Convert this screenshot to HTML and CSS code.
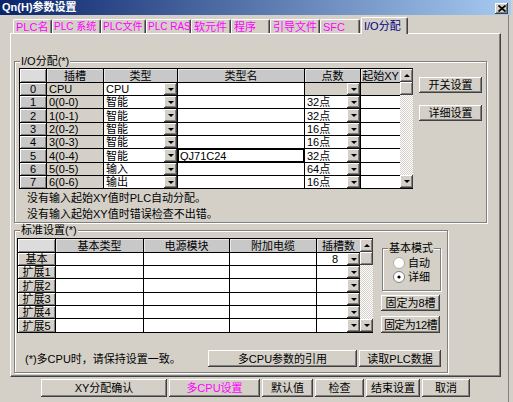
FILE: index.html
```html
<!DOCTYPE html>
<html lang="zh-CN">
<head>
<meta charset="utf-8">
<title>Qn(H)参数设置</title>
<link rel="stylesheet" href="styles.css">
</head>
<body>
<div class="window">
  <div class="titlebar">
    <span class="title">Qn(H)参数设置</span>
    <span class="close"><svg width="8" height="7" viewBox="0 0 8 7"><path d="M0.5 0.5L7.5 6.5M7.5 0.5L0.5 6.5" stroke="#000" stroke-width="1.7" fill="none"/></svg></span>
  </div>
  <div class="frame">
    <div class="tabs">
      <div class="tab w39">PLC名</div>
      <div class="tab w49 tight">PLC 系统</div>
      <div class="tab w45 tight">PLC文件</div>
      <div class="tab w45 tight">PLC RAS</div>
      <div class="tab w40">软元件</div>
      <div class="tab w39">程序</div>
      <div class="tab w50">引导文件</div>
      <div class="tab w40">SFC</div>
      <div class="tab sel">I/O分配</div>
    </div>
    <div class="panel">
      <div class="group grp1">
        <span class="legend">I/O分配(*)</span>
        <div class="g1-main">
          <div class="tbl">
            <div class="grid grid1">
              <div class="hc corner"></div><div class="hc">插槽</div><div class="hc">类型</div><div class="hc">类型名</div><div class="hc">点数</div><div class="hc">起始XY</div>

              <div class="rh">0</div><div class="sl">CPU</div><div class="w dd"><span>CPU</span><i class="ddb"></i></div><div class="w"></div><div class="gy dd"><span></span><i class="ddb"></i></div><div class="gy"></div>
              <div class="rh">1</div><div class="sl">0(0-0)</div><div class="w dd"><span>智能</span><i class="ddb"></i></div><div class="w"></div><div class="w dd"><span>32点</span><i class="ddb"></i></div><div class="w"></div>
              <div class="rh">2</div><div class="sl">1(0-1)</div><div class="w dd"><span>智能</span><i class="ddb"></i></div><div class="w"></div><div class="w dd"><span>32点</span><i class="ddb"></i></div><div class="w"></div>
              <div class="rh">3</div><div class="sl">2(0-2)</div><div class="w dd"><span>智能</span><i class="ddb"></i></div><div class="w"></div><div class="w dd"><span>16点</span><i class="ddb"></i></div><div class="w"></div>
              <div class="rh">4</div><div class="sl">3(0-3)</div><div class="w dd"><span>智能</span><i class="ddb"></i></div><div class="w"></div><div class="w dd"><span>16点</span><i class="ddb"></i></div><div class="w"></div>
              <div class="rh">5</div><div class="sl">4(0-4)</div><div class="w dd"><span>智能</span><i class="ddb"></i></div><div class="w focus">QJ71C24</div><div class="w dd"><span>32点</span><i class="ddb"></i></div><div class="w"></div>
              <div class="rh">6</div><div class="sl">5(0-5)</div><div class="w dd"><span>输入</span><i class="ddb"></i></div><div class="w"></div><div class="w dd"><span>64点</span><i class="ddb"></i></div><div class="w"></div>
              <div class="rh">7</div><div class="sl">6(0-6)</div><div class="w dd"><span>输出</span><i class="ddb"></i></div><div class="w"></div><div class="w dd"><span>16点</span><i class="ddb"></i></div><div class="w"></div>
            </div>
            <div class="vs">
              <div class="sb up"></div><div class="sb thumb"></div><div class="track"></div><div class="sb down"></div>
            </div>
          </div>
          <div class="side">
            <div class="btn side-btn">开关设置</div>
            <div class="btn side-btn second">详细设置</div>
          </div>
        </div>
        <p class="note first">没有输入起始XY值时PLC自动分配。</p>
        <p class="note">没有输入起始XY值时错误检查不出错。</p>
      </div>

      <div class="group grp2">
        <span class="legend">标准设置(*)</span>
        <div class="g2-main">
          <div class="tbl">
            <div class="grid grid2">
              <div class="hc corner"></div><div class="hc">基本类型</div><div class="hc">电源模块</div><div class="hc">附加电缆</div><div class="hc">插槽数</div>

              <div class="rh btnlike">基本</div><div class="w"></div><div class="w"></div><div class="w"></div><div class="w dd"><span class="num">8</span><i class="ddb"></i></div>
              <div class="rh btnlike">扩展1</div><div class="w"></div><div class="w"></div><div class="w"></div><div class="w dd"><span></span><i class="ddb"></i></div>
              <div class="rh btnlike">扩展2</div><div class="w"></div><div class="w"></div><div class="w"></div><div class="w dd"><span></span><i class="ddb"></i></div>
              <div class="rh btnlike">扩展3</div><div class="w"></div><div class="w"></div><div class="w"></div><div class="w dd"><span></span><i class="ddb"></i></div>
              <div class="rh btnlike">扩展4</div><div class="w"></div><div class="w"></div><div class="w"></div><div class="w dd"><span></span><i class="ddb"></i></div>
              <div class="rh btnlike">扩展5</div><div class="w"></div><div class="w"></div><div class="w"></div><div class="w dd"><span></span><i class="ddb"></i></div>
            </div>
            <div class="vs">
              <div class="sb up"></div><div class="sb thumb"></div><div class="track"></div><div class="sb down"></div>
            </div>
          </div>
          <div class="side2">
            <div class="mode">
              <span class="legend mode-legend">基本模式</span>
              <div class="radio"><svg class="rb" width="12" height="12" viewBox="0 0 12 12"><circle cx="6" cy="6" r="5.5" fill="#fff" stroke="#b0aca4"/></svg><span>自动</span></div>
              <div class="radio"><svg class="rb" width="12" height="12" viewBox="0 0 12 12"><circle cx="6" cy="6" r="5.5" fill="#fff" stroke="#808080"/><circle cx="6" cy="6" r="1.6" fill="#000"/></svg><span>详细</span></div>
            </div>
            <div class="btn fix8">固定为8槽</div>
            <div class="btn fix12">固定为12槽</div>
          </div>
        </div>
        <div class="footer-row">
          <span class="hint">(*)多CPU时，请保持设置一致。</span>
          <div class="btn ref-btn">多CPU参数的引用</div>
          <div class="btn read-btn">读取PLC数据</div>
        </div>
      </div>
    </div>

    <div class="btnrow">
      <div class="btn b1">XY分配确认</div>
      <div class="btn b2 pink">多CPU设置</div>
      <div class="btn b3">默认值</div>
      <div class="btn b4">检查</div>
      <div class="btn b5">结束设置</div>
      <div class="btn b6">取消</div>
    </div>
  </div>
</div>
</body>
</html>
```

FILE: styles.css
```css
* { box-sizing: border-box; }
html, body { margin: 0; padding: 0; }
body {
  width: 513px;
  height: 402px;
  overflow: hidden;
  background: #d4d0c8;
  font-family: "Liberation Sans", "Noto Sans CJK SC", sans-serif;
  font-size: 11px;
  line-height: 12px;
  color: #000;
}
.window {
  width: 511px;
  height: 402px;
  display: flex;
  flex-direction: column;
}
.titlebar {
  height: 15px;
  flex: none;
  background: linear-gradient(90deg, #0a246a 0%, #a6caf0 100%);
  display: flex;
  align-items: flex-start;
  justify-content: space-between;
  padding: 0 3px 0 2px;
}
.title {
  color: #fff;
  font-weight: bold;
  font-size: 11px;
  line-height: 15px;
}
.close {
  margin-top: 3px;
  width: 13px;
  height: 11px;
  background: #d4d0c8;
  box-shadow: inset -1px -1px #404040, inset 1px 1px #fff, inset -2px -2px #808080;
  display: flex;
  align-items: center;
  justify-content: center;
}
.frame {
  flex: 1;
  margin-right: 2px;
  border-right: 1px solid #808080;
}

/* tabs */
.tabs {
  height: 18px;
  display: flex;
  align-items: flex-end;
  padding-left: 13px;
}
.tab {
  height: 14px;
  border-top: 1px solid #fff;
  border-left: 1px solid #fff;
  border-right: 1px solid #404040;
  box-shadow: inset -1px 0 #808080;
  border-radius: 2px 2px 0 0;
  color: #ff00ff;
  display: flex;
  align-items: center;
  justify-content: flex-start;
  padding-left: 2px;
  white-space: nowrap;
  line-height: 12px;
}
.tab.tight { font-size: 10px; padding-left: 1px; }
.w39 { width: 39px; }
.w40 { width: 40px; }
.w45 { width: 45px; }
.w49 { width: 49px; }
.w50 { width: 50px; }
.tab.sel {
  width: 47px;
  height: 17px;
  margin-left: 1px;
  margin-bottom: -1px;
  background: #d4d0c8;
  color: #000080;
  z-index: 2;
  padding-bottom: 1px;
}

/* panel */
.panel {
  margin-left: 10px;
  width: 491px;
  height: 344px;
  border-style: solid;
  border-width: 1px;
  border-color: #fff #404040 #404040 #fff;
  box-shadow: inset -1px -1px #808080;
  padding-left: 3px;
  position: relative;
  z-index: 1;
}
.group {
  position: relative;
  border: 1px solid #808080;
  box-shadow: inset 1px 1px #fff, 1px 1px #fff;
}
.legend {
  position: absolute;
  top: -7px;
  left: 5px;
  background: #d4d0c8;
  padding: 0 1px;
  line-height: 13px;
  white-space: nowrap;
}
.grp1 {
  margin-top: 27px;
  width: 473px;
  height: 162px;
  padding: 6px 0 0 4px;
}
.g1-main, .g2-main {
  display: flex;
  align-items: flex-start;
}
.tbl { display: flex; }
.grid {
  display: grid;
  gap: 1px;
  background: #000;
  border: 1px solid #000;
  border-right: 0;
}
.grid1 {
  grid-template-columns: 26px 56px 73px 126px 55px 39px;
  grid-template-rows: 13px 12px 12px 13px 12px 12px 13px 12px 12px;
}
.grid2 {
  grid-template-columns: 37px 87px 85px 86px 43px;
  grid-template-rows: 13px 12px 12px 13px 12px 12px 13px;
}
.grid > div {
  display: flex;
  align-items: center;
  white-space: nowrap;
  line-height: 12px;
  min-width: 0;
}
.hc {
  background: #c8c8c8;
  justify-content: center;
  box-shadow: inset 1px 1px #e8e8e8;
}
.hc.corner { background: #dcdcdc; box-shadow: inset 1px 1px #fff, inset -1px -1px #808080; }
.rh {
  background: #c8c8c8;
  justify-content: center;
  box-shadow: inset 1px 1px #fff, inset -1px -1px #808080;
}
.rh.btnlike { background: #d4d0c8; }
.sl { background: #d4d0c8; padding-left: 2px; }
.w { background: #fff; padding-left: 2px; }
.gy { background: #d4d0c8; padding-left: 2px; }
.focus { box-shadow: inset 0 0 0 1px #000; }
.dd > span { flex: 1; }
.dd > span.num { text-align: right; padding-right: 9px; }
.ddb {
  width: 13px;
  flex: none;
  align-self: stretch;
  background: #d4d0c8;
  box-shadow: inset -1px -1px #404040, inset 1px 1px #fff, inset -2px -2px #808080;
  display: flex;
  align-items: center;
  justify-content: center;
}
.ddb::after, .sb.down::after {
  content: "";
  border-style: solid;
  border-width: 3px 3px 0;
  border-color: #000 transparent transparent;
}
.vs {
  width: 13px;
  display: flex;
  flex-direction: column;
  border-top: 1px solid #000;
  border-bottom: 1px solid #000;
}
.sb {
  height: 13px;
  flex: none;
  background: #d4d0c8;
  box-shadow: inset -1px -1px #404040, inset 1px 1px #fff, inset -2px -2px #808080;
  display: flex;
  align-items: center;
  justify-content: center;
}
.sb.up::after {
  content: "";
  border-style: solid;
  border-width: 0 3px 3px;
  border-color: transparent transparent #000;
}
.track {
  flex: 1;
  background-color: #fff;
  background-image: repeating-conic-gradient(#d4d0c8 0 25%, #fff 0 50%);
  background-size: 2px 2px;
}

/* buttons */
.btn {
  background: #d4d0c8;
  box-shadow: inset -1px -1px #404040, inset 1px 1px #fff, inset -2px -2px #808080;
  display: flex;
  align-items: center;
  justify-content: center;
  white-space: nowrap;
}
.side { margin-left: 6px; padding-top: 9px; width: 63px; }
.side-btn { height: 16px; }
.side-btn.second { margin-top: 12px; }
.note {
  margin: 0;
  padding-left: 8px;
  line-height: 16px;
}
.note.first { margin-top: 1px; }

.grp2 {
  margin-top: 7px;
  width: 434px;
  height: 143px;
  padding: 7px 0 0 2px;
}
.side2 { margin-left: 8px; width: 60px; }
.mode {
  position: relative;
  margin-top: 10px;
  margin-left: 1px;
  width: 59px;
  height: 43px;
  border: 1px solid #808080;
  box-shadow: inset 1px 1px #fff, 1px 1px #fff;
  padding: 7px 0 0 10px;
}
.mode-legend { left: 5px; }
.radio {
  display: flex;
  align-items: center;
  height: 14px;
  gap: 3px;
}
.rb { flex: none; }
.fix8 { margin-top: 4px; width: 59px; height: 16px; }
.fix12 { margin-top: 5px; width: 59px; height: 17px; letter-spacing: -0.5px; }

.footer-row {
  margin-top: 17px;
  height: 17px;
  display: flex;
  align-items: center;
}
.hint { width: 191px; padding-left: 8px; white-space: nowrap; }
.ref-btn { width: 149px; height: 17px; }
.read-btn { width: 82px; height: 17px; margin-left: 2px; }

.btnrow {
  margin-top: 2px;
  height: 18px;
  padding-left: 41px;
  display: flex;
  gap: 2px;
}
.btnrow .btn { height: 18px; }
.b1 { width: 126px; }
.b2 { width: 91px; }
.b3 { width: 51px; }
.b4 { width: 49px; }
.b5 { width: 54px; }
.b6 { width: 48px; }
.pink { color: #ff00ff; }
```
